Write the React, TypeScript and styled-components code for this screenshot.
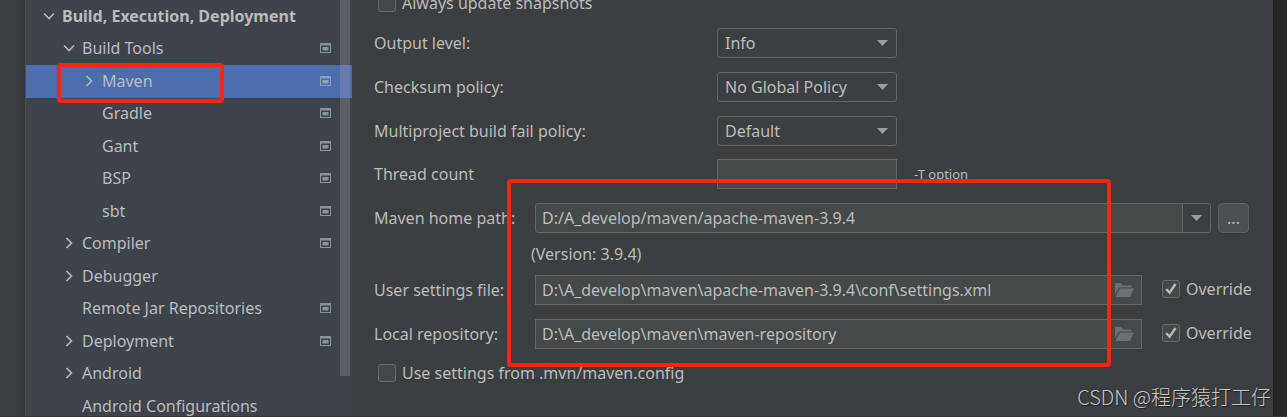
import React from 'react';
import styled, { createGlobalStyle } from 'styled-components';

const GlobalStyle = createGlobalStyle`
  * { box-sizing: border-box; }
  body {
    margin: 0;
    background: #3c3f41;
    color: #bbbbbb;
    font-family: "Noto Sans", "Noto Sans CJK SC", sans-serif;
    font-size: 16px;
    line-height: 22px;
  }
  input, select, button { font: inherit; color: inherit; margin: 0; }
`;

const Page = styled.div`
  position: relative;
  display: flex;
  height: 100vh;
  overflow: hidden;
  border-bottom: 1px solid #353739;
`;

const LeftGutter = styled.div`
  flex: none;
  width: 26px;
  border-right: 1px solid #4b4d4f;
  background: linear-gradient(to right, #3c3f41 60%, #35383a);
`;

const RightGutter = styled.div`
  flex: none;
  width: 14px;
  background: linear-gradient(to right, #222222, #282828 60%);
`;

const Sidebar = styled.nav`
  position: relative;
  flex: none;
  width: 326px;
  background: #3e434c;
`;

const Tree = styled.ul`
  display: grid;
  grid-auto-rows: 33px 32px;
  margin: 0;
  padding: 0;
  list-style: none;
`;

const TreeItem = styled.li<{ $level: number; $selected?: boolean; $bold?: boolean }>`
  position: relative;
  display: flex;
  align-items: center;
  gap: 7px;
  padding: 0 21px 2px ${p => 17 + p.$level * 20}px;
  background: ${p => (p.$selected ? '#4b6eaf' : 'transparent')};
  font-weight: ${p => (p.$bold ? 700 : 400)};
  white-space: nowrap;
`;

const TreeName = styled.span`
  flex: 1;
`;

const ChevronSlot = styled.span`
  display: flex;
  flex: none;
  justify-content: center;
  width: 12px;
`;

const ScrollThumb = styled.div`
  position: absolute;
  top: 0;
  right: 2px;
  width: 10px;
  height: 376px;
  background: rgba(166, 158, 166, 0.29);
`;

const Highlight = styled.div`
  position: absolute;
  border: 4px solid #ff2112;
  border-radius: 4px;
  pointer-events: none;
`;

const MavenHighlight = styled(Highlight)`
  top: -2px;
  left: 31px;
  width: 167px;
  height: 40px;
`;

const PathsHighlight = styled(Highlight)`
  top: 179px;
  left: 155px;
  right: 162px;
  height: 188px;
`;

const Panel = styled.main`
  position: relative;
  flex: 1;
  min-width: 0;
  background: #3c3f41;
`;

const Form = styled.form`
  display: flex;
  flex-direction: column;
  gap: 14px;
  margin-top: -8px;
  padding: 0 24px 0 22px;
`;

const Row = styled.div<{ $height?: number }>`
  display: flex;
  align-items: center;
  height: ${p => p.$height ?? 30}px;
  white-space: nowrap;
`;

const Label = styled.label<{ $wide?: boolean }>`
  flex: none;
  width: ${p => (p.$wide ? 343 : 161)}px;
`;

const Version = styled.span`
  padding-left: 157px;
`;

const SelectBox = styled.div`
  position: relative;
  width: 180px;
  height: 30px;
  svg {
    position: absolute;
    top: 12px;
    right: 9px;
    pointer-events: none;
  }
`;

const Select = styled.select`
  width: 100%;
  height: 100%;
  padding: 0 24px 0 7px;
  border: 1px solid #646464;
  border-radius: 3px;
  background: #3c3f41;
  appearance: none;
  outline: none;
`;

const Field = styled.div<{ $rounded?: boolean }>`
  display: flex;
  flex: 1;
  align-items: center;
  height: 30px;
  border: 1px solid #646464;
  border-radius: ${p => (p.$rounded ? 3 : 0)}px;
  background: #45494a;
  overflow: hidden;
`;

const TextInput = styled.input`
  flex: 1;
  min-width: 0;
  height: 28px;
  padding: 0 6px;
  border: 0;
  background: transparent;
  outline: none;
`;

const CountInput = styled.input`
  width: 180px;
  height: 30px;
  padding: 0 6px;
  border: 1px solid #646464;
  background: #45494a;
  outline: none;
`;

const Hint = styled.span`
  padding-left: 17px;
  font-size: 13px;
`;

const DropButton = styled.button`
  display: flex;
  align-items: center;
  justify-content: center;
  width: 28px;
  height: 28px;
  padding: 0;
  border: 0;
  border-left: 1px solid #646464;
  background: #3c3f41;
`;

const FolderButton = styled.button`
  display: flex;
  width: 33px;
  padding: 0 7px;
  border: 0;
  background: transparent;
`;

const BrowseButton = styled.button`
  width: 31px;
  height: 30px;
  margin-left: 7px;
  padding: 0;
  border: 1px solid #5e6060;
  border-radius: 4px;
  background: #4c5052;
  box-shadow: 0 1px 1px #323537;
`;

const CheckLabel = styled.label<{ $side?: boolean }>`
  display: flex;
  flex: none;
  align-items: center;
  gap: 6px;
  width: ${p => (p.$side ? '87px' : 'auto')};
  margin-left: ${p => (p.$side ? 20 : 4)}px;
  padding-bottom: ${p => (p.$side ? 2 : 0)}px;
`;

const CheckBox = styled.span`
  position: relative;
  display: flex;
  flex: none;
  width: 18px;
  height: 18px;
  svg {
    position: absolute;
    top: 0;
    left: 0;
    pointer-events: none;
  }
`;

const CheckInput = styled.input`
  width: 18px;
  height: 18px;
  border: 1px solid #6b6b6b;
  border-radius: 3px;
  background: #43494a;
  appearance: none;
  & + svg { visibility: hidden; }
  &:checked + svg { visibility: visible; }
`;

const Watermark = styled.div`
  position: absolute;
  right: 16px;
  bottom: 4px;
  color: #c4c5c6;
  font-family: "Noto Sans CJK SC", sans-serif;
  font-size: 20px;
  font-weight: 300;
  line-height: 30px;
  text-shadow: 1px 1px 1px #222222;
  white-space: nowrap;
`;

function Chevron({ open }: { open: boolean }) {
  return open ? (
    <svg width="12" height="8" viewBox="0 0 12 8" fill="none" stroke="#b4b6b9" strokeWidth="1.7">
      <path d="M1 1.5 6 6.5 11 1.5" />
    </svg>
  ) : (
    <svg width="8" height="12" viewBox="0 0 8 12" fill="none" stroke="#b4b6b9" strokeWidth="1.7">
      <path d="M1.5 1 6.5 6 1.5 11" />
    </svg>
  );
}

function ProjectIcon({ selected }: { selected?: boolean }) {
  return (
    <svg width="11" height="10" viewBox="0 0 11 10" fill={selected ? '#8b9fbd' : '#87939a'}>
      <path fillRule="evenodd" d="M0 0H11V10H0ZM1 2.500V9H10V2.500Z" />
      <path d="M2.500 4H8.500V7.500H2.500Z" />
    </svg>
  );
}

function Arrow() {
  return (
    <svg width="11" height="6" viewBox="0 0 11 6" fill="#9a9da0">
      <path d="M0 0H11L5.500 6Z" />
    </svg>
  );
}

function Folder() {
  return (
    <svg width="19" height="14" viewBox="0 0 19 14" fill="#667075">
      <path d="M0 0H6L8 2.500H16.500V4.500H4L0 11.500Z" />
      <path d="M4.700 5.500H19L15 14H0.500Z" />
    </svg>
  );
}

function Check({ children, checked, side }: { children: string; checked?: boolean; side?: boolean }) {
  return (
    <CheckLabel $side={side}>
      <CheckBox>
        <CheckInput type="checkbox" defaultChecked={checked} />
        <svg width="18" height="18" viewBox="0 0 18 18" fill="none" stroke="#b8baba" strokeWidth="2.400">
          <path d="M4.200 9.200 7.600 12.600 13.500 4" />
        </svg>
      </CheckBox>
      {children}
    </CheckLabel>
  );
}

function Choice({ id, label, value, height }: { id: string; label: string; value: string; height?: number }) {
  return (
    <Row $height={height}>
      <Label $wide htmlFor={id}>{label}</Label>
      <SelectBox>
        <Select id={id} defaultValue={value}>
          <option>{value}</option>
        </Select>
        <Arrow />
      </SelectBox>
    </Row>
  );
}

function PathRow({ id, label, value }: { id: string; label: string; value: string }) {
  return (
    <Row>
      <Label htmlFor={id}>{label}</Label>
      <Field>
        <TextInput id={id} defaultValue={value} />
        <FolderButton type="button" aria-label="Browse"><Folder /></FolderButton>
      </Field>
      <Check side checked>Override</Check>
    </Row>
  );
}

type Node = { name: string; level: number; open?: boolean; icon?: boolean; selected?: boolean; bold?: boolean };

const nodes: Node[] = [
  { name: 'Build, Execution, Deployment', level: 0, open: true, bold: true },
  { name: 'Build Tools', level: 1, open: true, icon: true },
  { name: 'Maven', level: 2, open: false, icon: true, selected: true },
  { name: 'Gradle', level: 2, icon: true },
  { name: 'Gant', level: 2, icon: true },
  { name: 'BSP', level: 2, icon: true },
  { name: 'sbt', level: 2, icon: true },
  { name: 'Compiler', level: 1, open: false, icon: true },
  { name: 'Debugger', level: 1, open: false },
  { name: 'Remote Jar Repositories', level: 1, icon: true },
  { name: 'Deployment', level: 1, open: false, icon: true },
  { name: 'Android', level: 1, open: false },
  { name: 'Android Configurations', level: 1 },
];

export default function App() {
  return (
    <>
      <GlobalStyle />
      <Page>
        <LeftGutter />
        <Sidebar>
          <Tree>
            {nodes.map(n => (
              <TreeItem key={n.name} $level={n.level} $selected={n.selected} $bold={n.bold}>
                <ChevronSlot>{n.open !== undefined && <Chevron open={n.open} />}</ChevronSlot>
                <TreeName>{n.name}</TreeName>
                {n.icon && <ProjectIcon selected={n.selected} />}
                {n.selected && <MavenHighlight />}
              </TreeItem>
            ))}
          </Tree>
          <ScrollThumb />
        </Sidebar>
        <Panel>
          <Form>
            <Row $height={22}><Check>Always update snapshots</Check></Row>
            <Choice id="output" label="Output level:" value="Info" />
            <Choice id="checksum" label="Checksum policy:" value="No Global Policy" />
            <Choice id="fail" label="Multiproject build fail policy:" value="Default" height={29} />
            <Row>
              <Label $wide htmlFor="threads">Thread count</Label>
              <CountInput id="threads" />
              <Hint>-T option</Hint>
            </Row>
            <Row>
              <Label htmlFor="home">Maven home path:</Label>
              <Field $rounded>
                <TextInput id="home" defaultValue="D:/A_develop/maven/apache-maven-3.9.4" />
                <DropButton type="button" aria-label="Show paths"><Arrow /></DropButton>
              </Field>
              <BrowseButton type="button">...</BrowseButton>
            </Row>
            <Row $height={14}><Version>(Version: 3.9.4)</Version></Row>
            <PathRow id="settings" label="User settings file:" value={'D:\\A_develop\\maven\\apache-maven-3.9.4\\conf\\settings.xml'} />
            <PathRow id="repository" label="Local repository:" value={'D:\\A_develop\\maven\\maven-repository'} />
            <Row $height={20}><Check>Use settings from .mvn/maven.config</Check></Row>
          </Form>
          <PathsHighlight />
        </Panel>
        <RightGutter />
        <Watermark>CSDN @程序猿打工仔</Watermark>
      </Page>
    </>
  );
}
